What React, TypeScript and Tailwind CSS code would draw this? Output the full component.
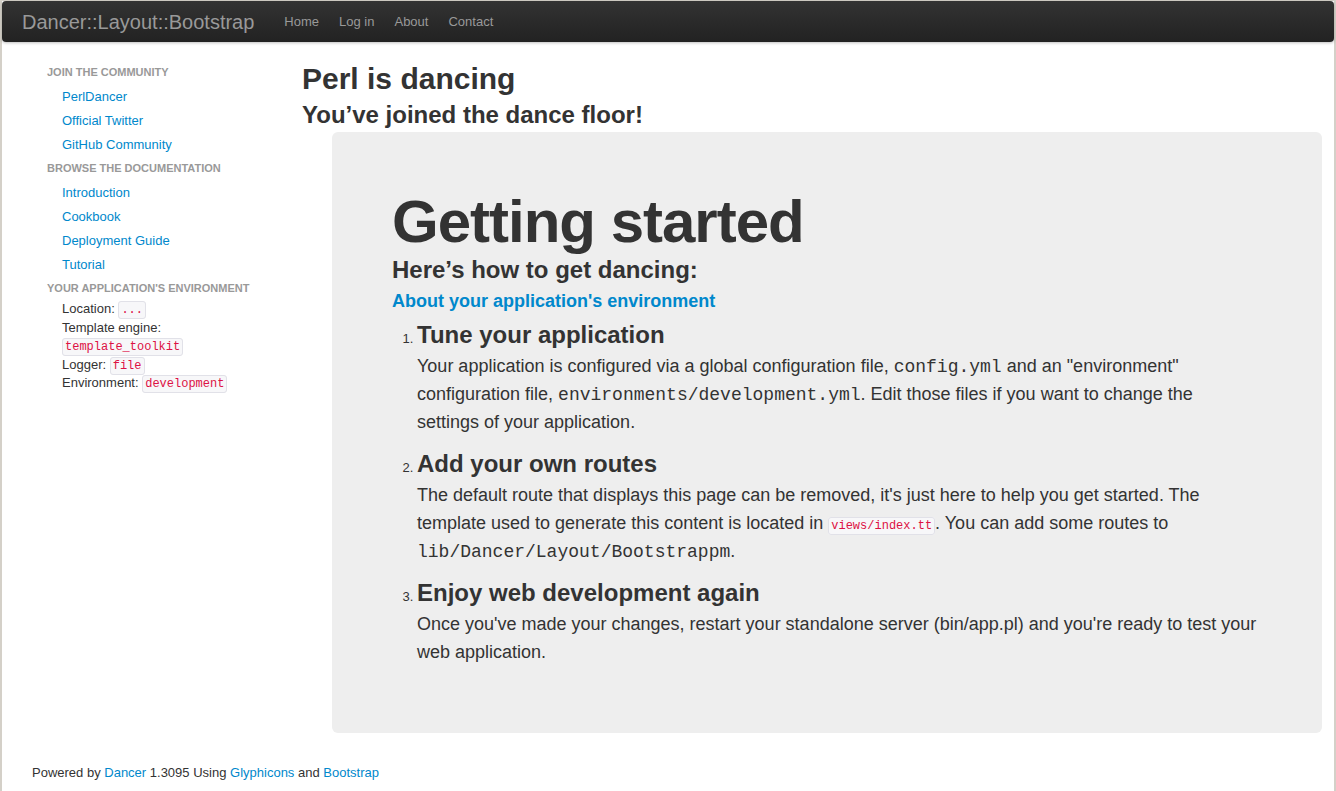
import React from "react";

const sans = "font-['Liberation_Sans',Arial,sans-serif]";
const mono = "font-['Liberation_Mono','Courier_New',monospace]";

function Pill({ children }: { children: React.ReactNode }) {
  return (
    <code
      className={`${mono} text-[12px] leading-[14px] text-[#dd1144] bg-[#f7f7f9] border border-[#e1e1e8] rounded-[3px] px-[2px] py-[1px]`}
    >
      {children}
    </code>
  );
}

function Tt({ children }: { children: React.ReactNode }) {
  return <code className={`${mono} text-[18px] leading-none`}>{children}</code>;
}

const navLinks = ["Home", "Log in", "About", "Contact"];

const sidebar = [
  { header: "Join the community", links: ["PerlDancer", "Official Twitter", "GitHub Community"] },
  { header: "Browse the documentation", links: ["Introduction", "Cookbook", "Deployment Guide", "Tutorial"] },
];

export default function App() {
  return (
    <div
      className={`${sans} min-h-screen bg-white text-[#333] text-[13px] leading-[18px] border-t border-l-2 border-r-2 border-[#d4d0c8]`}
    >
      {/* navbar */}
      <div className="h-[41px] flex items-center rounded-[4px] bg-linear-to-b from-[#333333] to-[#222222] shadow-[0_1px_3px_rgba(0,0,0,0.25)]">
        <a className="px-[20px] text-[20px] leading-[20px] text-[#999]">Dancer::Layout::Bootstrap</a>
        <ul className="flex">
          {navLinks.map((l) => (
            <li key={l}>
              <a className="block px-[10px] text-[13px] leading-[18px] text-[#999]">{l}</a>
            </li>
          ))}
        </ul>
      </div>

      <div className="flex mt-[18px] pl-[30px] pr-[12px]">
        {/* sidebar */}
        <aside className="w-[250px] shrink-0">
          <ul className="px-[15px]">
            {sidebar.map((s) => (
              <React.Fragment key={s.header}>
                <li className="py-[3px] text-[11px] leading-[18px] font-bold uppercase text-[#999]">{s.header}</li>
                {s.links.map((l) => (
                  <li key={l}>
                    <a className="block pl-[15px] pt-[4px] pb-[2px] text-[#0088cc]">{l}</a>
                  </li>
                ))}
              </React.Fragment>
            ))}
            <li className="py-[3px] text-[11px] leading-[18px] font-bold uppercase text-[#999]">
              Your application's environment
            </li>
            <li className="pl-[15px] leading-[18.5px]">
              Location: <Pill>...</Pill>
              <br />
              Template engine: <Pill>template_toolkit</Pill>
              <br />
              Logger: <Pill>file</Pill>
              <br />
              Environment: <Pill>development</Pill>
            </li>
          </ul>
        </aside>

        {/* main */}
        <main className="flex-1 ml-[20px]">
          <h1 className="text-[30px] leading-[36px] font-bold pt-[1px]">Perl is dancing</h1>
          <h2 className="text-[24px] leading-[35px] font-bold">You’ve joined the dance floor!</h2>

          <div className="ml-[30px] bg-[#eeeeee] rounded-[6px] pt-[60px] px-[60px] pb-[53px]">
            <h1 className="text-[60px] leading-[60px] font-bold tracking-[-1px]">Getting started</h1>
            <h2 className="text-[24px] leading-[36px] font-bold">Here’s how to get dancing:</h2>
            <p className="text-[18px] leading-[27px] font-bold">
              <a className="text-[#0088cc]">About your application's environment</a>
            </p>

            <ol className="mt-[6px] ml-[25px] list-decimal">
              <li className="text-[13px]">
                <h3 className="text-[24px] leading-[27px] font-bold mb-[4px]">Tune your application</h3>
                <p className="text-[18px] leading-[28px] mb-[14px]">
                  Your application is configured via a global configuration file, <Tt>config.yml</Tt> and an
                  "environment" configuration file, <Tt>environments/development.yml</Tt>. Edit those files if you
                  want to change the
                  <br />
                  settings of your application.
                </p>
              </li>
              <li className="text-[13px]">
                <h3 className="text-[24px] leading-[27px] font-bold mb-[4px]">Add your own routes</h3>
                <p className="text-[18px] leading-[28px] mb-[14px]">
                  The default route that displays this page can be removed, it's just here to help you get started.
                  The template used to generate this content is located in <Pill>views/index.tt</Pill>. You can add
                  some routes to <Tt>lib/Dancer/Layout/Bootstrappm</Tt>.
                </p>
              </li>
              <li className="text-[13px]">
                <h3 className="text-[24px] leading-[27px] font-bold mb-[4px]">Enjoy web development again</h3>
                <p className="text-[18px] leading-[28px] mb-[14px]">
                  Once you've made your changes, restart your standalone server (bin/app.pl) and you're ready to test
                  your web application.
                </p>
              </li>
            </ol>
          </div>
        </main>
      </div>

      <footer className="mt-[31px] pl-[30px] pb-[10px]">
        Powered by <a className="text-[#0088cc]">Dancer</a> 1.3095 Using{" "}
        <a className="text-[#0088cc]">Glyphicons</a> and <a className="text-[#0088cc]">Bootstrap</a>
      </footer>
    </div>
  );
}
